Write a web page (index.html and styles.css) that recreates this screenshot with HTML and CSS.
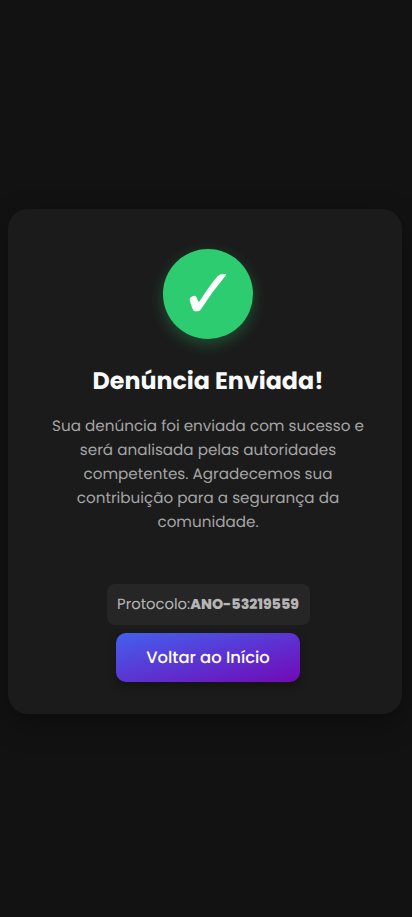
FILE: index.html
```html
<!DOCTYPE html>
<html lang="pt-BR">
<head>
<meta charset="utf-8">
<meta name="viewport" content="width=device-width, initial-scale=1">
<title>Denúncia Enviada</title>
<link rel="stylesheet" href="styles.css">
</head>
<body>
<main class="card">
  <div class="success-icon">✓</div>
  <h1 class="title">Denúncia Enviada!</h1>
  <p class="message">
    <span class="line">Sua denúncia foi enviada com sucesso e</span>
    <span class="line">será analisada pelas autoridades</span>
    <span class="line">competentes. Agradecemos sua</span>
    <span class="line">contribuição para a segurança da</span>
    <span class="line">comunidade.</span>
  </p>
  <div class="protocol"><span class="protocol-label">Protocolo:</span><strong class="protocol-code">ANO-53219559</strong></div>
  <a class="button"><span class="button-label">Voltar ao Início</span></a>
</main>
</body>
</html>
```
FILE: styles.css
```css
* { box-sizing: border-box; }
body {
  margin: 0;
  min-height: 917px;
  padding: 209px 10px 0 8px;
  background: #121212;
  color: #f8f9fa;
  font-family: Poppins, Inter, sans-serif;
  text-rendering: geometricPrecision;
  overflow: hidden;
}
.card {
  height: 505px;
  padding: 40px 34px 32px 40px;
  display: flex;
  flex-direction: column;
  align-items: center;
  text-align: center;
  background: #1b1b1b;
  border-radius: 20px;
  box-shadow: 0 10px 30px rgba(0, 0, 0, 0.3);
}
.success-icon {
  width: 90px;
  height: 90px;
  border-radius: 50%;
  background: #2ecc71;
  box-shadow: 0 5px 15px rgba(46, 204, 113, 0.3);
  color: #fff;
  font-family: "DejaVu Sans", sans-serif;
  font-size: 70px;
  line-height: 90px;
  text-indent: 1px;
}
.title {
  margin: 25px 0 0;
  font-size: 23.75px;
  font-weight: 700;
  line-height: 36px;
  white-space: nowrap;
}
.message {
  margin: 15px 0 0;
  font-size: 15.2px;
  font-weight: 400;
  line-height: 24px;
  color: #a5a5a5;
}
.line { display: block; white-space: nowrap; }
.protocol {
  margin-top: 49px;
  width: 203px;
  height: 41px;
  flex: none;
  display: flex;
  align-items: baseline;
  justify-content: center;
  padding-top: 8px;
  border-radius: 8px;
  background: #262626;
  color: #b5b5b5;
  font-size: 14.8px;
  font-weight: 400;
  line-height: 24px;
  white-space: nowrap;
}
.protocol-code { font-size: 14.25px; font-weight: 800; }
.button {
  margin-top: 8px;
  width: 184px;
  height: 49px;
  flex: none;
  display: flex;
  align-items: center;
  justify-content: center;
  border-radius: 10px;
  background: linear-gradient(to bottom right, #4361ee, #7209b7);
  box-shadow: 0 4px 10px rgba(0, 0, 0, 0.3);
  color: #fff;
  font-size: 16.4px;
  font-weight: 500;
  white-space: nowrap;
}
```
